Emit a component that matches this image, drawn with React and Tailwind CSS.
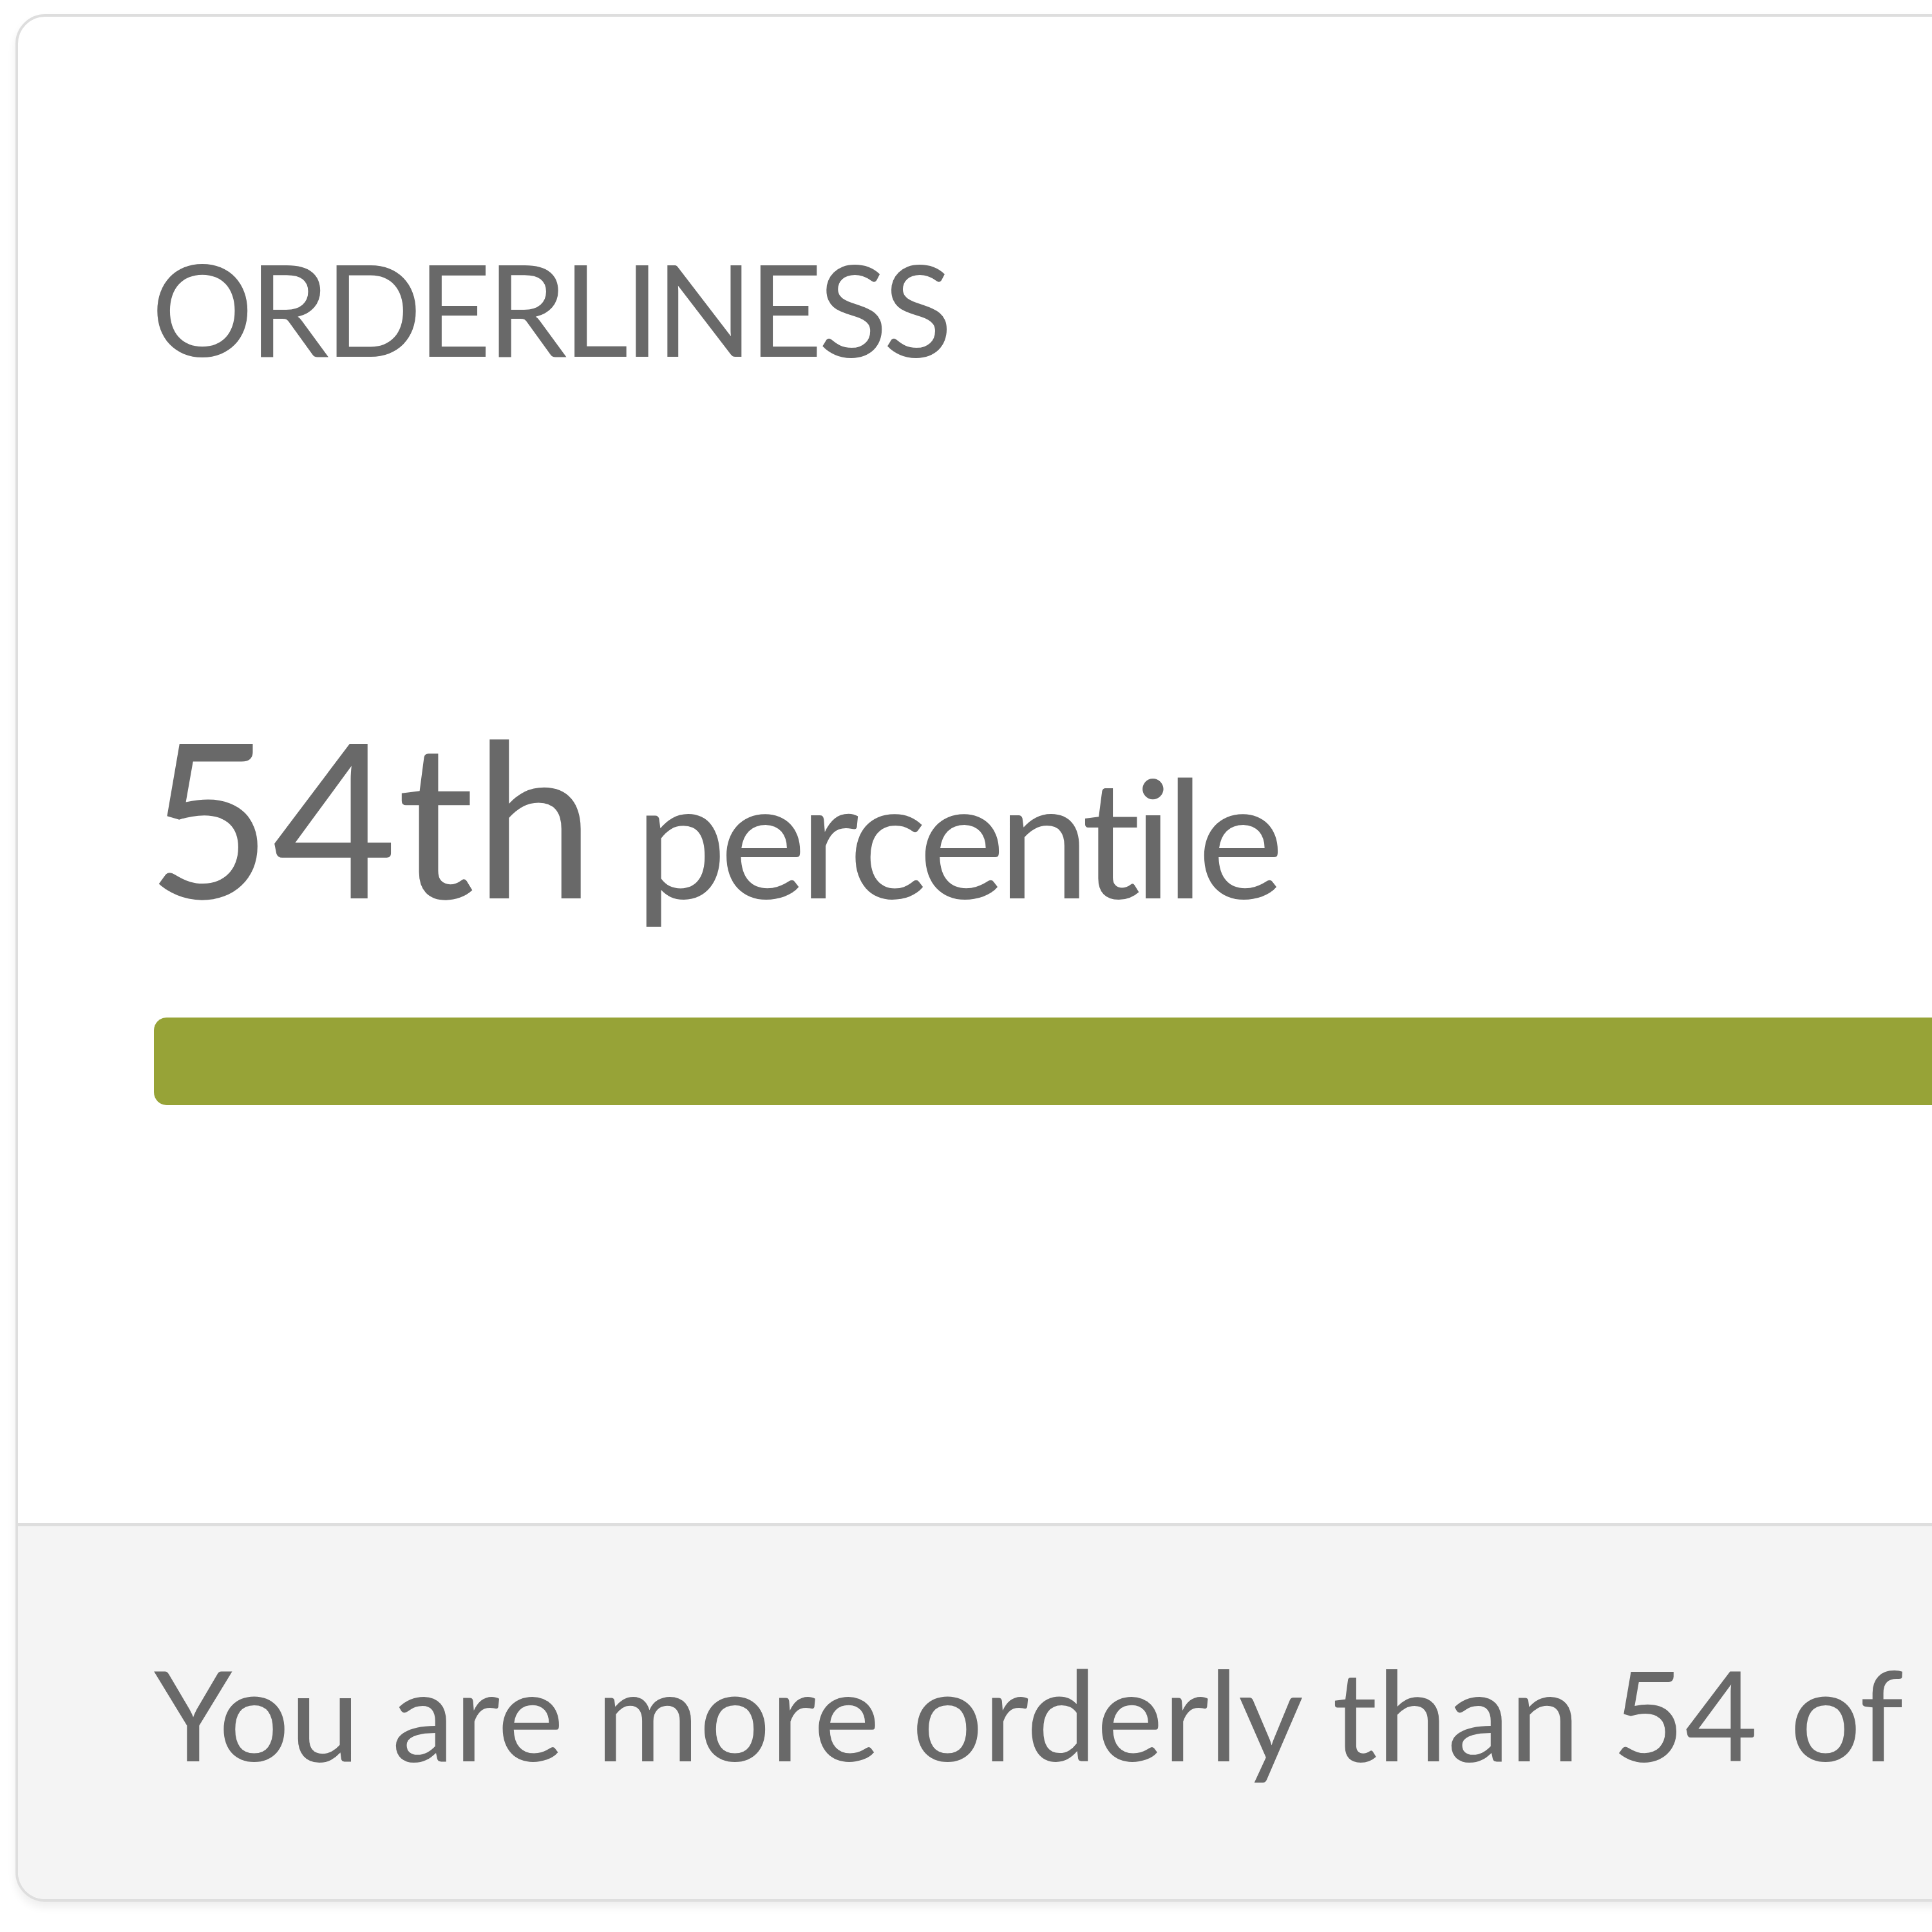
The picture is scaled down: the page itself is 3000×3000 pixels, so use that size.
export default function App() {
  const percentile = 54;

  return (
    <div className="w-[3000px] h-[3000px] overflow-hidden bg-white pt-[22px] pl-[24px] font-['Lato',sans-serif] text-[#696969]">
      <div className="w-[3300px] rounded-[46px] border-[4px] border-[#dedede] bg-white overflow-hidden shadow-[0_8px_14px_rgba(0,0,0,0.07)]">
        {/* Score */}
        <div className="pl-[211px] pr-[200px] pt-[353px] pb-[649px]">
          <h2 className="-ml-[4px] text-[198px] leading-none tracking-[-6.5px] uppercase">
            Orderliness
          </h2>

          <div className="mt-[521px] flex items-baseline">
            <span className="-ml-[11px] text-[335px] leading-none">{percentile}th</span>
            <span className="ml-[62px] text-[255px] leading-none tracking-[-11px]">percentile</span>
          </div>

          <div className="mt-[147px] h-[136px] rounded-[20px] bg-[#97a337]" />
        </div>

        {/* Summary */}
        <div className="border-t-[5px] border-[#dedede] bg-[#f4f4f4] pl-[211px] pt-[193px] pb-[191px]">
          <p className="text-[195px] leading-none whitespace-nowrap">
            You are more orderly than {percentile} of 100 people.
          </p>
        </div>
      </div>
    </div>
  );
}
